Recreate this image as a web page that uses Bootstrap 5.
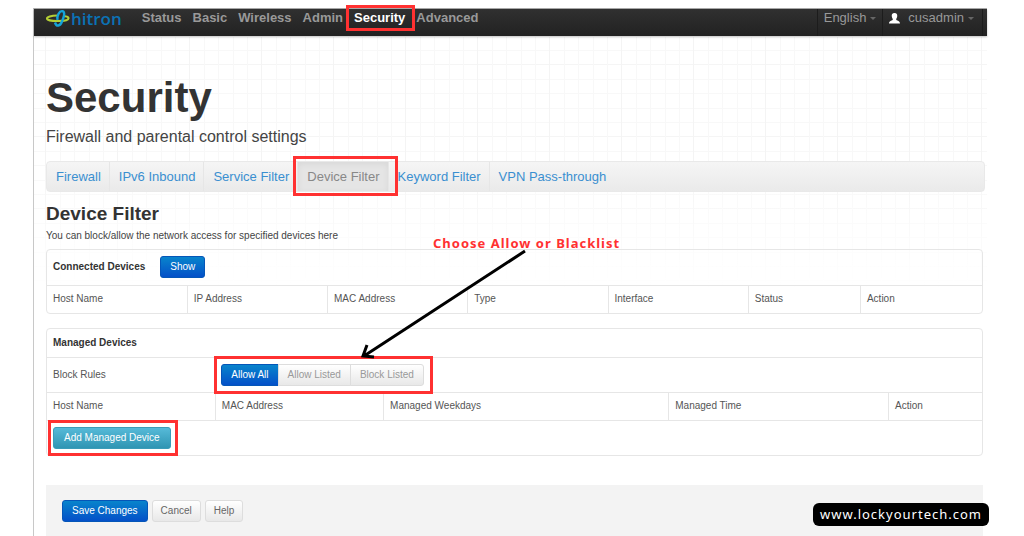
<!DOCTYPE html>
<html lang="en">
<head>
<meta charset="utf-8">
<meta name="viewport" content="width=device-width, initial-scale=1">
<title>Hitron - Security</title>
<link rel="stylesheet" href="https://cdn.jsdelivr.net/npm/bootstrap@5.3.0/dist/css/bootstrap.min.css">
<script src="https://cdn.jsdelivr.net/npm/bootstrap@5.3.0/dist/js/bootstrap.bundle.min.js"></script>
<style>
  body { font-family: "Liberation Sans", Arial, sans-serif; font-size: 10px; line-height: 14px; color: #555; background: #fff; }
  .console { margin: 8px 37px 0 33px; min-height: calc(100vh - 8px); border-left: 1px solid #c8c8c8; border-top: 1px solid #aaa; }
  .console-body { padding: 0 4px 0 12px; }

  /* graph-paper backdrop that fades out below the heading */
  .graph-paper { inset: 28px 0 auto 0; height: 250px; z-index: -1;
    background:
      linear-gradient(rgba(255,255,255,0) 50%, #fff),
      repeating-linear-gradient(90deg, transparent 0 11px, #f4f4f4 11px 12px, transparent 12px 26px, #f8f8f8 26px 27px, transparent 27px 40px, #f8f8f8 40px 41px, transparent 41px 55px, #f8f8f8 55px 56px, transparent 56px 69px, #f8f8f8 69px 70px, transparent 70px 72px),
      repeating-linear-gradient(180deg, transparent 0 13px, #f8f8f8 13px 14px, transparent 14px 27px, #f5f5f5 27px 28px, transparent 28px 42px, #f8f8f8 42px 43px, transparent 43px 56px, #f8f8f8 56px 57px, transparent 57px 71px, #f8f8f8 71px 72px); }

  /* top bar */
  .topbar { height: 27px; padding: 0 4px 0 12px; background: linear-gradient(#303030, #222); box-shadow: 0 1px 2px rgba(0,0,0,.25); font-size: 13px; line-height: 18px; }
  .topbar a { color: #999; text-decoration: none; }
  .topbar .main-links { gap: 11px; margin-left: 20px; font-weight: 700; }
  .topbar .main-links .active { color: #fff; }
  .brand-text { font-family: "Open Sans", sans-serif; font-weight: 600; font-size: 17px; line-height: 19px; color: #0b72b5; }
  .user-links > a { padding: 0 6px; border-left: 1px solid #1c1c1c; height: 27px; }
  .user-links > a:last-child { border-right: 1px solid #1c1c1c; padding: 0 8px 0 6px; }
  .caret { border: 3px solid transparent; border-top-color: #666; border-bottom: 0; }

  /* headings */
  h1 { font-size: 42px; line-height: 48px; font-weight: 700; color: #333; margin: 38px 0 0; }
  .lead-in { font-size: 16px; line-height: 20px; color: #444; margin: 5px 0 14px; }
  h2 { font-size: 19px; line-height: 24px; font-weight: 700; color: #333; margin: 10px 0 3px; }
  .hint { margin: 0 0 6px; color: #444; }

  /* section tabs */
  .section-tabs { font-size: 13px; line-height: 29px; margin-right: -2px; border: 1px solid #e9e9e9; border-radius: 4px; background: linear-gradient(#f5f5f5, #eaeaea); }
  .section-tabs a { display: block; padding: 0 8px 0 9px; color: #3a8fd0; text-decoration: none; border-right: 1px solid #e6e6e6; }
  .section-tabs .active { color: #888; background: #e5e5e5; box-shadow: inset 0 2px 6px rgba(0,0,0,.06); }
  .section-tabs li:last-child a { border-right: 0; }

  /* device tables */
  .panel { border: 1px solid #e6e6e6; border-radius: 4px; margin-bottom: 14px; }
  .device-table { --bs-table-bg: transparent; --bs-table-color: #555; table-layout: fixed; margin: 0; border: 0; }
  .device-table > tbody > tr > * { padding: 0 6px; height: 28px; border: 0 solid #e6e6e6; vertical-align: middle; font-weight: 400; }
  .device-table > tbody > tr + tr > * { border-top-width: 1px; }
  .device-table > tbody > .columns > * + * { border-left-width: 1px; }
  .device-table > tbody > tr > .caption-cell { font-weight: 700; color: #333; }
  .device-table > tbody > .tall > * { height: 35px; }

  /* buttons */
  .btn { --bs-btn-font-size: 10px; --bs-btn-line-height: 14px; --bs-btn-padding-x: 9px; --bs-btn-padding-y: 3px; --bs-btn-border-radius: 3px; }
  .btn-deep { --bs-btn-color: #fff; --bs-btn-border-color: #0556b8; background: linear-gradient(#0884cc, #0450c8); }
  .btn-aqua { --bs-btn-color: #fff; --bs-btn-border-color: #3a9cb8; --bs-btn-padding-x: 10px; background: linear-gradient(#56bad8, #2f95b3); }
  .btn-pale { --bs-btn-color: #666; --bs-btn-border-color: #ddd; --bs-btn-padding-x: 8px; background: linear-gradient(#fff, #e8e8e8); }
  .btn-group .btn-pale { --bs-btn-color: #999; --bs-btn-padding-x: 9px; }
  .caption-cell .btn { margin-left: 15px; }

  .actions { background: #f3f3f3; padding: 15px 16px; margin-top: 29px; }

  /* annotations */
  .ring { position: relative; }
  .ring::after { content: ""; position: absolute; inset: var(--ring); border: 3px solid #ff3131; pointer-events: none; z-index: 2; }
  .callout { left: 328px; top: 226px; z-index: 3; }
  .callout svg { overflow: visible; }
  .callout-text { font: 700 13px/16px "Noto Sans", sans-serif; letter-spacing: 1px; color: #ff3131; margin-left: 71px; }
  .site-tag { right: 35px; bottom: 11px; height: 23px; padding: 0 7px; border-radius: 6px; background: #000; color: #fff; font: 400 13px/23px "Noto Sans", sans-serif; letter-spacing: 1px; text-decoration: none; z-index: 4; }
</style>
</head>
<body class="position-relative">
<div class="console position-relative">
  <div class="graph-paper position-absolute"></div>

  <header class="topbar d-flex align-items-start">
    <a href="#" class="d-flex" aria-label="hitron">
      <svg width="25" height="20" viewBox="0 0 25 20" fill="none">
        <path d="M11 6.500C5 6.500 1 8 1 9.500C1 11 5 12 11.500 12C18 12 22.500 11 22.500 9.200C22.500 8 20 7.200 17.500 7" stroke="#b4cf35" stroke-width="2.200"/>
        <path d="M9 13.500C10.500 18 14 17.500 16 12.500C18 8 19.500 3 16.500 2.200C13.500 1.500 10.500 7 11.500 11" stroke="#14a3d8" stroke-width="2.400"/>
      </svg>
      <span class="brand-text">hitron</span>
    </a>
    <nav class="main-links d-flex" aria-label="Main">
      <a href="#">Status</a>
      <a href="#">Basic</a>
      <a href="#">Wireless</a>
      <a href="#">Admin</a>
      <a href="#" class="active ring" style="--ring: -4px -10px -4px -8px">Security</a>
      <a href="#">Advanced</a>
    </nav>
    <div class="user-links d-flex ms-auto">
      <a href="#">English<span class="caret d-inline-block align-middle ms-1"></span></a>
      <a href="#"><svg class="me-2" width="11" height="11" viewBox="0 0 11 11"><path fill="#fff" d="M5.500 0C7.700 0 8.500 1.500 8.200 3.500C8 5 7.200 5.500 7.200 6.500C7.200 7.700 11 7.500 11 10.500H0C0 7.500 3.800 7.700 3.800 6.500C3.800 5.500 3 5 2.800 3.500C2.500 1.500 3.300 0 5.500 0Z"/></svg>cusadmin<span class="caret d-inline-block align-middle ms-1"></span></a>
    </div>
  </header>

  <main class="console-body">
    <h1>Security</h1>
    <p class="lead-in">Firewall and parental control settings</p>

    <ul class="section-tabs list-unstyled d-flex mb-0">
      <li><a href="#">Firewall</a></li>
      <li><a href="#">IPv6 Inbound</a></li>
      <li><a href="#">Service Filter</a></li>
      <li><a href="#" class="active ring" style="--ring: -6px -10px -5px -5px">Device Filter</a></li>
      <li><a href="#">Keyword Filter</a></li>
      <li><a href="#">VPN Pass-through</a></li>
    </ul>

    <h2>Device Filter</h2>
    <p class="hint">You can block/allow the network access for specified devices here</p>

    <div class="panel">
      <table class="table device-table">
        <colgroup><col style="width:15%"><col style="width:15%"><col style="width:15%"><col style="width:15%"><col style="width:15%"><col style="width:12%"><col style="width:13%"></colgroup>
        <tbody>
          <tr class="tall"><th class="caption-cell" colspan="7">Connected Devices<button type="button" class="btn btn-deep">Show</button></th></tr>
          <tr class="columns"><th scope="col">Host Name</th><th scope="col">IP Address</th><th scope="col">MAC Address</th><th scope="col">Type</th><th scope="col">Interface</th><th scope="col">Status</th><th scope="col">Action</th></tr>
        </tbody>
      </table>
    </div>

    <div class="panel">
      <table class="table device-table">
        <colgroup><col style="width:18%"><col style="width:18%"><col style="width:30.5%"><col style="width:23.5%"><col style="width:10%"></colgroup>
        <tbody>
          <tr><th class="caption-cell" colspan="5">Managed Devices</th></tr>
          <tr class="tall"><td>Block Rules</td><td colspan="4">
            <div class="btn-group ring" role="group" aria-label="Block Rules" style="--ring: -8px -9px -8px -7px">
              <button type="button" class="btn btn-deep">Allow All</button>
              <button type="button" class="btn btn-pale">Allow Listed</button>
              <button type="button" class="btn btn-pale">Block Listed</button>
            </div></td></tr>
          <tr class="columns"><th scope="col">Host Name</th><th scope="col">MAC Address</th><th scope="col">Managed Weekdays</th><th scope="col">Managed Time</th><th scope="col">Action</th></tr>
          <tr class="tall"><td colspan="5"><span class="ring d-inline-block" style="--ring: -7px -7px -7px -5px"><button type="button" class="btn btn-aqua">Add Managed Device</button></span></td></tr>
        </tbody>
      </table>
    </div>

    <div class="actions d-flex gap-1">
      <button type="submit" class="btn btn-deep">Save Changes</button>
      <button type="button" class="btn btn-pale">Cancel</button>
      <button type="button" class="btn btn-pale">Help</button>
    </div>
  </main>

  <div class="callout position-absolute">
    <div class="callout-text">Choose Allow or Blacklist</div>
    <svg class="d-block" width="168" height="108" viewBox="0 0 168 108" fill="none" stroke="#000" stroke-width="3">
      <path d="M163 0L2 105M5 94L1 105L12 106"/>
    </svg>
  </div>
</div>
<a href="#" class="site-tag position-absolute">www.lockyourtech.com</a>
</body>
</html>
